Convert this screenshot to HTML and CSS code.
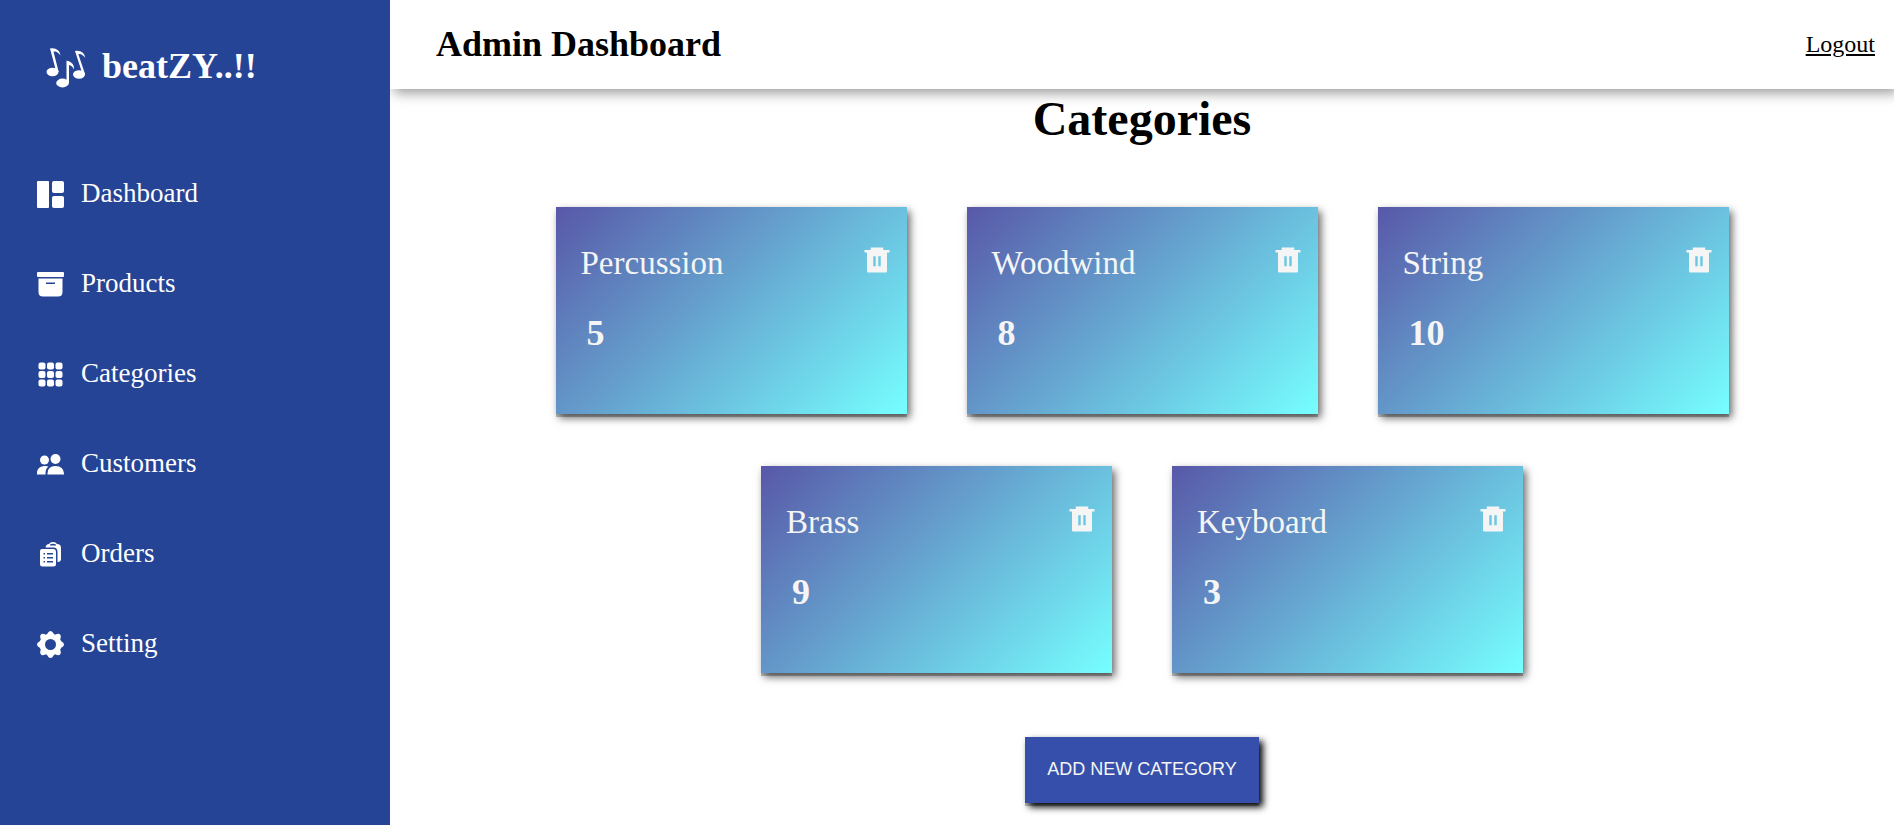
FILE: index.html
```html
<!DOCTYPE html>
<html lang="en">
<head>
<meta charset="utf-8">
<title>Admin Dashboard</title>
<link rel="stylesheet" href="styles.css">
</head>
<body>
<svg class="sprite" aria-hidden="true">
  <symbol id="trash" viewBox="0 0 24 24"><path fill-rule="evenodd" d="M17 4h5v2h-2v15a1 1 0 0 1-1 1H5a1 1 0 0 1-1-1V6H2V4h5V2h10v2zM9 9v8h2V9H9zm4 0v8h2V9h-2z"/></symbol>
</svg>
<aside class="sidebar">
  <div class="brand">
    <svg class="brand-icon" viewBox="0 0 40 42" aria-hidden="true">
      <g fill="#fff">
        <ellipse cx="6.500" cy="25" rx="6" ry="4.200"/><ellipse cx="16.500" cy="36" rx="6.300" ry="4.400"/><ellipse cx="33" cy="27.500" rx="6" ry="4.200"/>
        <path d="M4 1.500c6-1 10 2 10.500 7-2.500-3.500-4.500-4-7-4L12.700 25h-2.400z"/>
        <path d="M20.500 13.500c4 1 8 3 7.500 9-1.500-3-3-4-5-4.500v18.500h-2.500z"/>
        <path d="M29 4c6-1 9.500 2 10.300 7-2.500-3.500-4.500-4-7-4L39 27h-2.500z"/>
      </g>
    </svg>
    <h1 class="brand-name">beatZY..!!</h1>
  </div>
  <nav class="nav">
    <a class="nav-link" href="#"><svg class="nav-icon" viewBox="0 0 27 27" aria-hidden="true"><rect width="12" height="27" rx="1"/><rect x="15" width="12" height="12" rx="2"/><rect x="15" y="15" width="12" height="12" rx="2"/></svg>Dashboard</a>
    <a class="nav-link" href="#"><svg class="nav-icon" viewBox="0 0 27 27" aria-hidden="true"><rect y="1" width="27" height="5" rx="1"/><path fill-rule="evenodd" d="M1.500 7.500h24V21q0 4.500-4.500 4.500H6Q1.500 25.500 1.500 21zM9 11.500v1.500h9v-1.500z"/></svg>Products</a>
    <a class="nav-link" href="#"><svg class="nav-icon" viewBox="0 0 27 27" aria-hidden="true"><rect x="1.500" y="1.500" width="7" height="7" rx="2"/><rect x="10" y="1.500" width="7" height="7" rx="2"/><rect x="18.500" y="1.500" width="7" height="7" rx="2"/><rect x="1.500" y="10" width="7" height="7" rx="2"/><rect x="10" y="10" width="7" height="7" rx="2"/><rect x="18.500" y="10" width="7" height="7" rx="2"/><rect x="1.500" y="18.500" width="7" height="7" rx="2"/><rect x="10" y="18.500" width="7" height="7" rx="2"/><rect x="18.500" y="18.500" width="7" height="7" rx="2"/></svg>Categories</a>
    <a class="nav-link" href="#"><svg class="nav-icon" viewBox="0 0 27 27" aria-hidden="true"><circle cx="18.500" cy="8" r="5"/><circle cx="7.500" cy="9" r="4.500"/><path d="M10.500 23.500v-1q0-7.500 8-7.500t8.500 7.500v1zM0 23.500V22c0-7 8-8 11.500-6.500-2.500 2-3 4-3 8z"/></svg>Customers</a>
    <a class="nav-link" href="#"><svg class="nav-icon" viewBox="0 0 27 27" aria-hidden="true"><path fill-rule="evenodd" d="M5 8h11q3 0 3 3v12q0 2.500-2.500 2.500h-11Q3 25.500 3 23V10q0-2 2-2zM6.500 12v1.500H8V12zm3.500 0v1.500h6V12zM6.500 16v1.500H8V16zm3.500 0v1.500h6V16zM6.500 20v1.500H8V20zm3.500 0v1.500h6V20z"/><path d="M8.500 6.500Q9 3 12 3q1-2 4-2t4 2q4 0 4 4v11q0 3-3.500 3V11q0-4.500-4-4.500zM13 4.500h6V3.500Q16 2 13 3.500z" fill-rule="evenodd"/></svg>Orders</a>
    <a class="nav-link" href="#"><svg class="nav-icon" viewBox="0 0 27 27" aria-hidden="true"><path fill-rule="evenodd" d="M10.500 2.500Q11.500 0 13.500 0t3 2.500l1.500 1.300q4-1.800 5-.3 1.500 1 .2 5l1.300 2Q27 11.500 27 13.500t-2.500 3l-1.300 2q1.300 4-.2 5-1 1.500-5-.3l-1.500 1.300q-1 2.500-3 2.500t-3-2.500L9 23.200q-4 1.800-5 .3-1.500-1-.2-5l-1.300-2Q0 15.500 0 13.500t2.500-3l1.300-2q-1.300-4 .2-5 1-1.500 5 .3zm3 5.500a5.500 5.500 0 1 0 0 11 5.500 5.500 0 0 0 0-11z"/></svg>Setting</a>
  </nav>
</aside>
<div class="page">
  <header class="topbar">
    <h2 class="topbar-title">Admin Dashboard</h2>
    <a class="logout" href="#">Logout</a>
  </header>
  <main class="content">
    <h2 class="heading">Categories</h2>
    <div class="cards">
      <article class="card"><div class="card-top"><h3 class="card-title">Percussion</h3><button class="delete" aria-label="Delete Percussion"><svg class="trash"><use href="#trash"/></svg></button></div><p class="count">5</p></article>
      <article class="card"><div class="card-top"><h3 class="card-title">Woodwind</h3><button class="delete" aria-label="Delete Woodwind"><svg class="trash"><use href="#trash"/></svg></button></div><p class="count">8</p></article>
      <article class="card"><div class="card-top"><h3 class="card-title">String</h3><button class="delete" aria-label="Delete String"><svg class="trash"><use href="#trash"/></svg></button></div><p class="count">10</p></article>
      <article class="card"><div class="card-top"><h3 class="card-title">Brass</h3><button class="delete" aria-label="Delete Brass"><svg class="trash"><use href="#trash"/></svg></button></div><p class="count">9</p></article>
      <article class="card"><div class="card-top"><h3 class="card-title">Keyboard</h3><button class="delete" aria-label="Delete Keyboard"><svg class="trash"><use href="#trash"/></svg></button></div><p class="count">3</p></article>
    </div>
    <button class="add">ADD NEW CATEGORY</button>
  </main>
</div>
</body>
</html>
```
FILE: styles.css
```css
* { box-sizing: border-box; margin: 0; padding: 0; }

body {
  display: flex;
  min-height: 100vh;
  background: #fff;
  color: #000;
  font-family: "Liberation Serif", "Times New Roman", serif;
}

.sprite { position: absolute; width: 0; height: 0; }

.sidebar {
  z-index: 1;
  flex: none;
  width: 390px;
  background: #254496;
  color: #fff;
}

.brand {
  display: flex;
  align-items: center;
  gap: 16px;
  padding: 43px 0 0 46px;
}

.brand-icon { width: 40px; height: 42px; margin-top: 4px; }
.brand-name { font-size: 36px; line-height: 42px; }

.nav {
  display: flex;
  flex-direction: column;
  gap: 50px;
  padding: 84px 0 0 37px;
}

.nav-link {
  display: flex;
  align-items: center;
  gap: 17px;
  color: #fff;
  font-size: 27px;
  line-height: 40px;
  text-decoration: none;
}

.nav-icon { width: 27px; height: 27px; margin-top: 2px; fill: #fff; }

.page { flex: 1; min-width: 0; }

.topbar {
  display: flex;
  align-items: center;
  justify-content: space-between;
  padding: 24px 19px 24px 46px;
  box-shadow: 4px 4px 12px rgba(0, 0, 0, 0.4);
}

.topbar-title { font-size: 36px; line-height: 41px; }

.logout { color: #000; font-size: 24px; }

.content {
  display: flex;
  flex-direction: column;
  align-items: center;
}

.heading { font-size: 48px; line-height: 60px; }

.cards {
  display: flex;
  flex-wrap: wrap;
  justify-content: center;
  gap: 52px 60px;
  margin-top: 58px;
  padding: 0 80px;
}

.card {
  width: 351px;
  min-height: 207px;
  padding: 36px 15px 24px 25px;
  background: linear-gradient(135deg, #5858a8, #76ffff);
  box-shadow: 0 3px 0 rgba(0, 0, 0, 0.25), 3px 4px 8px rgba(0, 0, 0, 0.6);
  color: #f5f5f5;
}

.card-top { display: flex; justify-content: space-between; }
.card-title { font-size: 33px; font-weight: 400; line-height: 40px; }

.delete {
  padding-top: 2px;
  align-self: flex-start;
  border: 0;
  background: none;
  color: inherit;
  line-height: 0;
}

.trash { width: 30px; height: 30px; fill: currentColor; }

.count {
  margin-top: 30px;
  padding-left: 6px;
  font-size: 36px;
  font-weight: 700;
  line-height: 40px;
}

.add {
  margin: 64px 0 22px;
  padding: 21px 22px 23px;
  border: 0;
  background: #364fab;
  box-shadow: 0 3px 0 rgba(0, 0, 0, 0.25), 4px 4px 7px #000;
  color: #f5f5f5;
  font-family: "Liberation Sans", Arial, sans-serif;
  font-size: 18px;
  line-height: 22px;
}
```
